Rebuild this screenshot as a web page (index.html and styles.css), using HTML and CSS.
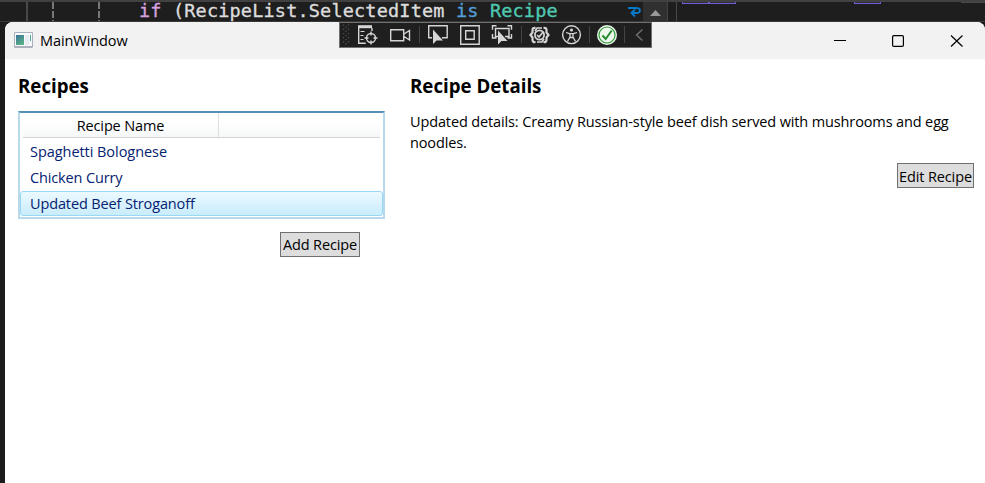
FILE: index.html
```
<!DOCTYPE html>
<html lang="en">
<head>
<meta charset="utf-8">
<title>MainWindow</title>
<link rel="stylesheet" href="styles.css">
</head>
<body>
<div class="editor">
  <div class="code-pane">
    <i class="guide solid"></i><i class="guide"></i><i class="guide second"></i>
    <code><span class="ctl">if</span> (RecipeList.SelectedItem <span class="kw">is</span> <span class="type">Recipe</span></code>
    <svg class="wrap" width="15" height="12" viewBox="0 0 15 12"><path d="M1 2h8q4 0 4 2.500t-4 2.500H5M8 3.500L4.500 7l3.500 3.500" fill="none" stroke="#0878c8" stroke-width="1.900"/></svg>
  </div>
  <div class="scroll"><svg width="11" height="6"><path d="M0 6L5.500 0 11 6z" fill="#999"/></svg></div>
  <div class="side-pane"><i class="tab"></i><i class="tab"></i><i class="tab far"></i><i class="corner"></i></div>
</div>
<main class="window">
  <header class="titlebar">
    <svg class="app-icon" width="19" height="16" viewBox="0 0 19 16"><defs><linearGradient id="g" x2=".6" y2="1"><stop stop-color="#3d7199"/><stop offset="1" stop-color="#57b184"/></linearGradient></defs><path d="M.5.5h18v14.500H.5z" fill="#f8f9fb" stroke="#a9afbd"/><path d="M.5 15h18" stroke="#8d919d"/><path d="M2 3h8v10H2z" fill="url(#g)"/><path d="M11 3h4v10h-4z" fill="#e9ebf2"/><path d="M16 3h1v6h-1z" fill="#51a494"/></svg>
    <span class="title">MainWindow</span>
    <svg class="controls" width="132" height="14" viewBox="0 0 132 14" fill="none" stroke="#000" stroke-width="1.200"><path d="M0 6.500h12"/><rect x="58.600" y="1.600" width="10.800" height="10.800" rx="1.200"/><path d="M117 1.500l11.500 11M128.500 1.500l-11.500 11"/></svg>
  </header>
  <div class="content">
    <section class="recipes">
      <h2>Recipes</h2>
      <div class="list">
        <div class="list-head"><div class="col"><span class="t-name">Recipe Name</span></div></div>
        <div class="row"><span class="t-spag">Spaghetti Bolognese</span></div>
        <div class="row"><span class="t-curry">Chicken Curry</span></div>
        <div class="row selected"><span class="t-beef">Updated Beef Stroganoff</span></div>
      </div>
      <button class="add"><span class="t-add">Add Recipe</span></button>
    </section>
    <section class="details">
      <h2>Recipe Details</h2>
      <p><span class="t-line">Updated details: Creamy Russian-style beef dish served with mushrooms and egg</span><br><span class="t-last">noodles.</span></p>
      <button class="edit"><span class="t-edit">Edit Recipe</span></button>
    </section>
  </div>
</main>
<div class="debugbar">
  <svg width="311" height="24" viewBox="340 23 311 24" fill="none" stroke="#d6d6d6" stroke-width="1.400">
    <g stroke="#555" stroke-width="1.200" stroke-dasharray="1.200 3"><path d="M343.500 24.500v21M348.500 24.500v21"/><path d="M346 26.500v19"/></g>
    <path d="M358 26.700h14" stroke-width="3"/><path d="M358.700 28v15.300h7M372 28v3"/><path d="M360.500 31.500h4M360.500 35.500h3M360.500 39.500h3" stroke-width="1.200"/>
    <circle cx="371" cy="38" r="4.500"/><path d="M371 31.500v4M371 40.500v4M364.500 38h4M373.500 38h4"/>
    <path d="M390.700 29.700h13v11h-13zM404 34l5.500-3.500v9.500l-5.500-3.500"/>
    <g stroke="#444" stroke-width="1"><path d="M419.500 26v17M521.500 26v17M589.500 26v17M624.500 26v17"/></g>
    <path d="M432 37.700h-3.300v-12h18.500v12H442"/><path d="M433 29.500v14.500l3.500-3.500h6.500z" fill="#d6d6d6" stroke="none"/>
    <path d="M460.700 25.700h18.500v18.500h-18.500z"/><path d="M465.700 30.700h8.500v8.500h-8.500z"/>
    <path d="M496.500 25.700h-4v4M507.500 25.700h4v4M492.500 34v4h4M511.500 34v4h-4M498 36.500h-2.500v-8h13.500v8H505"/><path d="M498 30.500v14l3.500-3.500h6z" fill="#d6d6d6" stroke="none"/>
    <path d="M535.500 28q-3-.5-3 2v2.500l-2 2.500 2 2.500v2.500q0 2.500 3 2M543.500 28q3-.5 3 2v2.500l2 2.500-2 2.500v2.500q0 2.500-3 2" stroke-width="2.200"/><circle cx="539.500" cy="35" r="4.600" stroke-width="1.800"/><path d="M537 35l2 2 4-5M535 31l2-3h5M544 39l-2 3h-5" stroke-width="1.700"/>
    <circle cx="571.500" cy="34.700" r="8.900"/><circle cx="571.500" cy="30" r="1.600" fill="#d6d6d6" stroke="none"/><path d="M566 32.500l3.500 1.200h4l3.500-1.200M570 34v3l-2.500 4.500M573 34v3l2.500 4.500M570 37.500h3" stroke-width="1.300"/>
    <circle cx="607" cy="35" r="10" fill="#edf7ec" stroke="none"/><circle cx="607" cy="35" r="8" stroke="#2f9a3a" stroke-width="1.200"/><path d="M602.500 35.500l3.200 3.500 6-8.500" stroke="#258b2d" stroke-width="2"/>
    <path d="M642.500 29.500l-6 5.500 6 5.500" stroke="#707070"/>
  </svg>
</div>
</body>
</html>
```
FILE: styles.css
```
* { box-sizing: border-box; }
body { margin: 0; width: 985px; height: 483px; overflow: hidden; position: relative; background: #1c1c1c; font: 15px/20px "Open Sans", "Noto Sans", sans-serif; color: #000; }
.editor { height: 22px; display: flex; border-top: 2px solid #414141; border-bottom: 1px solid #393939; background: #1e1e1e; }
.code-pane { width: 643px; display: flex; }
.guide { width: 2px; flex: none; margin-right: 44px; background: repeating-linear-gradient(#777 0 7px, transparent 7px 9px); }
.guide.solid { background: #484848; margin: 0 24px 0 26px; }
.guide.second { margin-right: 39px; }
code { width: 488px; flex: none; white-space: pre; color: #dcdcdc; font: 18.500px/18px "DejaVu Sans Mono", monospace; letter-spacing: .18px; -webkit-text-stroke: .35px currentColor; }
.ctl { color: #d8a0df; }
.kw { color: #569cd6; }
.type { color: #4ec9b0; }
.wrap { flex: none; margin-top: 4px; }
.scroll { width: 25px; background: #303030; border-right: 1px solid #444; padding: 8px 0 0 7px; line-height: 0; }
.side-pane { flex: 1; margin-left: 8px; border-left: 1px solid #484848; display: flex; padding-left: 5px; }
.tab { height: 2px; width: 27px; border: solid #735cdb; border-width: 0 1px 1px; background: #303030; }
.tab.far { margin-left: 118px; }
.corner { height: 1px; width: 24px; margin-left: auto; background: #4b4b4b; }
.window { margin-left: 5px; height: 461px; background: #fff; border-radius: 8px 8px 0 0; overflow: hidden; }
.titlebar { height: 37px; background: #f2f2f2; display: flex; align-items: center; padding: 0 19px 0 9px; }
.app-icon { margin-top: -1px; }
.title { margin: 1px auto 0 7px; font-size: 14.500px; letter-spacing: -.08px; }
.content { display: flex; padding: 16px 11px 0 13px; }
.recipes { width: 392px; }
.details { width: 569px; flex: 1; }
h2 { margin: 0; height: 36px; font: bold 18.700px/21px "Open Sans", "Noto Sans", sans-serif; letter-spacing: 0; }
.list { width: 367px; height: 108px; border: 2px solid #b8d8eb; border-top-color: #568fba; }
.list-head { height: 25px; margin: 0 3px; border-bottom: 1px solid #d5d5d5; background: linear-gradient(#fff 40%, #f6f7f8); }
.col { width: 196px; height: 24px; border-right: 1px solid #dfdfdf; text-align: center; line-height: 24px; }
.row { height: 26px; padding-left: 10px; line-height: 27px; color: #042271; }
.selected { height: 25px; margin-top: 1px; border: 1px solid #98d8f5; border-radius: 3px; background: linear-gradient(#ecf9ff, #c9ecfc); padding-left: 9px; line-height: 23px; }
button { display: block; height: 25px; border: 1px solid #707070; padding: 0; background: #ddd; color: #000; font: 15px/23px "Open Sans", "Noto Sans", sans-serif; white-space: nowrap; }
.add { width: 80px; margin: 13px 0 0 262px; }
.edit { width: 77px; margin: 12px 0 0 auto; line-height: 25px; }
p { margin: 0; height: 40px; white-space: nowrap; }
.row span, .col span, p span, button span { font-size: 14.500px; letter-spacing: -.13px; }
.row .t-spag { letter-spacing: -.05px; }
.debugbar { position: absolute; left: 339px; top: 22px; width: 313px; height: 26px; border: 1px solid #707070; background: #1f1f1f; line-height: 0; }
```
